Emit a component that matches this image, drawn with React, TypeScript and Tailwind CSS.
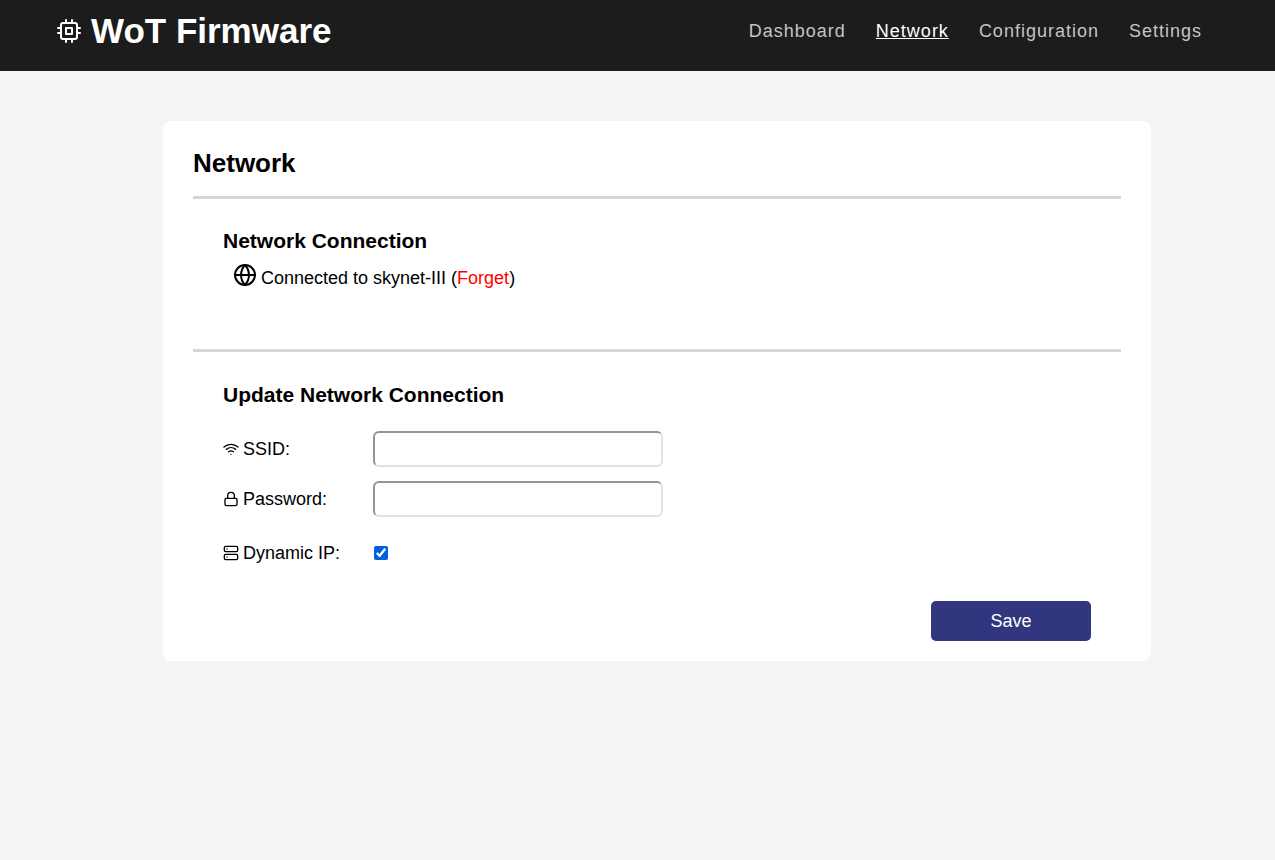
import { useState } from "react";
import type { ReactNode } from "react";
import { FiCpu, FiGlobe, FiLock, FiServer, FiWifi } from "react-icons/fi";

const links = ["Dashboard", "Network", "Configuration", "Settings"];

const inputClass =
  "h-9 w-[290px] rounded-md border-2 border-t-[#949494] border-l-[#949494] border-r-[#e3e3e3] border-b-[#e3e3e3] bg-white px-2";

function Field({ id, icon, label, children }: { id: string; icon: ReactNode; label: string; children: ReactNode }) {
  return (
    <div className="flex h-9 items-center">
      <label htmlFor={id} className="flex w-[150px] items-center gap-1">
        {icon}
        {label}
      </label>
      {children}
    </div>
  );
}

export default function App() {
  const [ssid, setSsid] = useState("");
  const [password, setPassword] = useState("");
  const [dynamic, setDynamic] = useState(true);

  return (
    <div className="min-h-screen bg-[#f4f4f4] font-['Liberation_Sans',Arial,sans-serif] text-lg leading-5 text-black">
      <header className="flex items-start justify-between bg-[#1c1c1c] pt-2.5 pr-[73px] pb-5 pl-[57px]">
        <div className="flex items-center gap-2.5 text-white">
          <FiCpu size={24} />
          <span className="text-[35px] leading-[41px] font-bold">WoT Firmware</span>
        </div>
        <nav className="flex gap-[30px] pt-[11px] tracking-[1px]">
          {links.map((link) => (
            <a
              key={link}
              href={`#${link.toLowerCase()}`}
              aria-current={link === "Network" ? "page" : undefined}
              className="text-[#c4c4c4] aria-[current=page]:text-white aria-[current=page]:underline"
            >
              {link}
            </a>
          ))}
        </nav>
      </header>

      <main className="mt-[50px] mr-[124px] ml-[163px] rounded-lg bg-white px-[30px] pt-[27px] pb-5">
        <h1 className="text-[26px] leading-[30px] font-bold">Network</h1>

        <section className="mt-[18px] border-t-[3px] border-[#d6d6d6] px-[30px] pt-[30px] pb-[60px]">
          <h2 className="text-[21px] leading-6 font-bold">Network Connection</h2>
          <div className="mt-2.5 flex items-start gap-1 pl-2.5">
            <FiGlobe size={24} />
            <p className="pt-1 leading-[22px]">
              Connected to skynet-III (
              <button type="button" className="text-[#ff0000]">
                Forget
              </button>
              )
            </p>
          </div>
        </section>

        <section className="border-t-[3px] border-[#d6d6d6] px-[30px] pt-[31px]">
          <h2 className="text-[21px] leading-6 font-bold">Update Network Connection</h2>
          <form className="mt-6 flex flex-col gap-3.5" onSubmit={(e) => e.preventDefault()}>
            <Field id="ssid" icon={<FiWifi size={16} />} label="SSID:">
              <input id="ssid" type="text" value={ssid} onChange={(e) => setSsid(e.target.value)} className={inputClass} />
            </Field>
            <Field id="password" icon={<FiLock size={16} />} label="Password:">
              <input
                id="password"
                type="password"
                value={password}
                onChange={(e) => setPassword(e.target.value)}
                className={inputClass}
              />
            </Field>
            <div className="pt-1">
              <Field id="dynamic" icon={<FiServer size={16} />} label="Dynamic IP:">
                <input
                  id="dynamic"
                  type="checkbox"
                  checked={dynamic}
                  onChange={(e) => setDynamic(e.target.checked)}
                  className="ml-px size-3.5 accent-[#0060df]"
                />
              </Field>
            </div>
            <button type="submit" className="mt-4 h-10 w-40 self-end rounded-[5px] bg-[#31367f] text-white">
              Save
            </button>
          </form>
        </section>
      </main>
    </div>
  );
}
